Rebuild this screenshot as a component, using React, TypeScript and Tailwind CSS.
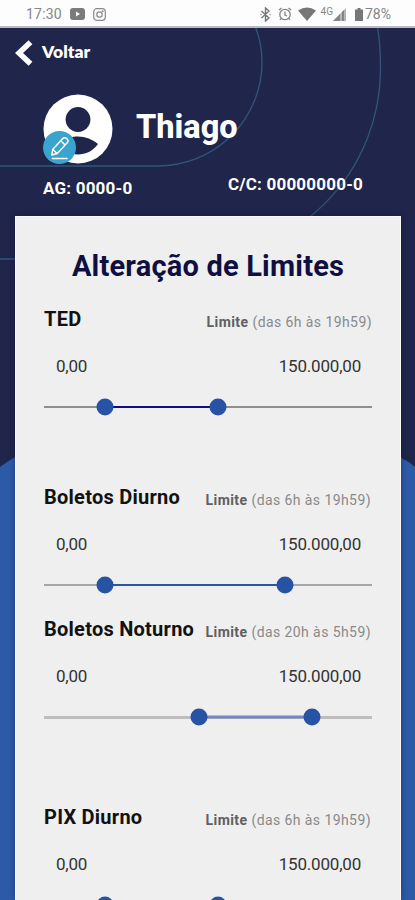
import React, { useState } from 'react';
import clsx from 'clsx';

interface LimitRow {
  id: string;
  name: string;
  hours: string;
  range: [number, number];
  gap: string;
  track: string;
  fill: string;
}

const LIMITS: LimitRow[] = [
  { id: 'ted', name: 'TED', hours: '(das 6h às 19h59)', range: [60.5, 173.5], gap: 'mt-[22px]', track: 'h-[1.5px] bg-[#8f8f8f]', fill: 'h-[2px] bg-[#0e0e85]' },
  { id: 'boletos-diurno', name: 'Boletos Diurno', hours: '(das 6h às 19h59)', range: [60.5, 241], gap: 'mt-[66px]', track: 'h-[2px] bg-[#a6a6a6]', fill: 'h-[2px] bg-[#2857a4]' },
  { id: 'boletos-noturno', name: 'Boletos Noturno', hours: '(das 20h às 5h59)', range: [155, 268], gap: 'mt-[20px]', track: 'h-[3px] bg-[#bdbdbd]', fill: 'h-[3px] bg-[#7488bd]' },
  { id: 'pix-diurno', name: 'PIX Diurno', hours: '(das 6h às 19h59)', range: [60.5, 173.5], gap: 'mt-[76px]', track: 'h-[2px] bg-[#a6a6a6]', fill: 'h-[2px] bg-[#2857a4]' },
];

export default function App() {
  return (
    <div className="relative flex h-[900px] w-[415px] flex-col overflow-hidden bg-[#20254b] font-['Roboto',sans-serif]">
      <Backdrop />
      <StatusBar />

      <header className="relative flex h-[188px] shrink-0 flex-col text-white">
        <button className="mt-[11px] ml-[15px] flex h-[27px] w-fit items-center gap-[9px]">
          <svg width="18" height="26" viewBox="0 0 18 26" fill="none" stroke="white" strokeWidth="5.5">
            <path d="M15.5 2.2 4 13 15.5 23.8" />
          </svg>
          <span className="mb-[2px] font-['Lato',sans-serif] text-[17.5px] leading-none font-extrabold">Voltar</span>
        </button>

        <div className="mt-[28px] ml-[43px] flex h-[70px] items-center gap-[23px]">
          <Avatar />
          <h1 className="mb-[3px] text-[32.5px] leading-none font-extrabold">Thiago</h1>
        </div>

        <div className="mt-[9px] flex justify-between pr-[52px] pl-[43px] text-[17px] leading-[20px] font-bold tracking-[0.2px]">
          <span className="mt-[5px]">AG: 0000-0</span>
          <span className="mt-px">C/C: 00000000-0</span>
        </div>
      </header>

      <main className="relative mx-[15px] w-[386px] flex-1 overflow-hidden border-x border-t border-[#fafafa] bg-[#efefef] shadow-[0_0_6px_rgba(10,10,70,0.4)]">
        <h2 className="mt-[32px] text-center text-[29px] leading-[34px] font-bold tracking-[0.2px] text-[#0f1040]">Alteração de Limites</h2>
        <div className="px-[28px]">
          {LIMITS.map((limit) => (
            <LimitSlider key={limit.id} limit={limit} />
          ))}
        </div>
      </main>
    </div>
  );
}

function LimitSlider({ limit }: { limit: LimitRow }) {
  const [[from, to]] = useState(limit.range);

  return (
    <section className={clsx('flex flex-col', limit.gap)}>
      <div className="flex h-[28px] items-center justify-between">
        <h3 className="text-[20px] leading-none font-bold tracking-[0.25px] text-[#121212]">{limit.name}</h3>
        <p className={clsx('mt-[6px] text-[14px] leading-none tracking-[0.42px] text-[#8a8a8a]', limit.id !== 'ted' && 'mr-px')}>
          <b className="font-bold text-[#606060]">Limite</b> {limit.hours}
        </p>
      </div>
      <div className="mt-[22px] flex h-[22px] items-center justify-between pr-[11px] pl-[12px] text-[17px] leading-none tracking-[-0.2px] text-[#333]">
        <span>0,00</span>
        <span>150.000,00</span>
      </div>
      <div className="relative mt-[20px] flex h-[20px] items-center">
        <div className={clsx('w-full', limit.track)} />
        <div
          className={clsx('absolute top-1/2 -translate-y-1/2', limit.fill)}
          style={{ left: from, width: to - from }}
        />
        {[from, to].map((x) => (
          <span
            key={x}
            className="absolute top-1/2 h-[17px] w-[17px] -translate-x-1/2 -translate-y-1/2 rounded-full bg-[#2653a3]"
            style={{ left: x }}
          />
        ))}
      </div>
    </section>
  );
}

function Avatar() {
  return (
    <div className="relative h-[70px] w-[70px]">
      <svg width="70" height="70" viewBox="0 0 70 70">
        <circle cx="35" cy="35" r="34.5" fill="white" />
        <circle cx="35" cy="25.500" r="12.400" fill="#20254b" />
        <path d="M15 50C20 45 28 42.500 35 42.500S50 45.500 55 50C50 57 42.500 60.500 35 60.500S20 57 15 50Z" fill="#20254b" />
      </svg>
      <div className="absolute bottom-0 left-0 flex h-[33px] w-[33px] items-center justify-center rounded-full bg-[#39a5cf]">
        <svg width="20" height="24" viewBox="0 0 20 24" fill="none" stroke="white" strokeWidth="1.500" strokeLinejoin="round" strokeLinecap="round">
          <path d="M1.800 19 2.700 13.500 12.500 2.700Q14.500 0.800 16.800 2.600T17.200 6.800L7.200 17.500ZM10.800 4.800l4.300 4.200M2.700 13.500l4.500 4" />
          <path d="M2.500 22.500h14.500" />
        </svg>
      </div>
    </div>
  );
}

function StatusBar() {
  return (
    <div className="relative flex h-[28px] shrink-0 items-center border-b-2 border-[#b9bac2] bg-[#fdfdfd] pt-[2px] pr-[24px] pl-[26px] text-[14px] leading-none text-[#858585]">
      <span className="w-[36px] tracking-[0.2px]">17:30</span>
      <svg className="ml-[8px]" width="15" height="12" viewBox="0 0 15 12">
        <rect width="15" height="12" rx="3" fill="#7b7b7b" />
        <path d="M6 3.500v5L10 6Z" fill="white" />
      </svg>
      <svg className="ml-[8px]" width="13" height="13" viewBox="0 0 13 13" fill="none" stroke="#8a8a8a" strokeWidth="1.200">
        <rect x="0.700" y="0.700" width="11.600" height="11.600" rx="3" />
        <circle cx="6.500" cy="6.500" r="2.700" />
        <circle cx="9.700" cy="3.300" r="0.400" />
      </svg>

      <svg className="ml-auto" width="11" height="15" viewBox="0 0 11 15" fill="none" stroke="#777" strokeWidth="1.400">
        <path d="M1.500 4 9 11 5.500 14V1L9 4 1.500 11M0.500 7.500h1M9.500 7.500h1" />
      </svg>
      <svg className="ml-[7px]" width="14" height="14" viewBox="0 0 14 14" fill="none" stroke="#858585" strokeWidth="1.300">
        <circle cx="7" cy="7.500" r="5.200" />
        <path d="M7 4.500V8l2 1M1 3l2.500-2M13 3l-2.500-2M3 11.500l-1 1.500M11 11.500l1 1.500" />
      </svg>
      <svg className="ml-[6px]" width="18" height="14" viewBox="0 0 18 14">
        <path d="M0 3.500Q9-2.500 18 3.500L9 14Z" fill="#777" />
      </svg>
      <span className="mb-[5px] ml-[5px] text-[10px]">4G</span>
      <svg width="13" height="13" viewBox="0 0 13 13">
        <path d="M13 0V13H0Z" fill="#b5b5b5" />
        <path d="M7 6V13H0ZM9 4v9h2V2Z" fill="#858585" />
      </svg>
      <svg className="ml-[9px]" width="8" height="13" viewBox="0 0 8 13">
        <path d="M2.500 0h3v1.500H8V13H0V1.500h2.500Z" fill="#777" />
      </svg>
      <span className="ml-[2px]">78%</span>
    </div>
  );
}

// Thin arcs behind the header and the blue ground behind the card
function Backdrop() {
  return (
    <svg className="absolute inset-0" width="415" height="900" viewBox="0 0 415 900" fill="none">
      <g stroke="#31557b" strokeWidth="1.300">
        <path d="M0 166H158A104 104 0 0 0 262 62Q262 44 255.500 27" />
        <path d="M0 259H190.500A190 190 0 0 0 380.500 69Q380.500 44 377.500 27" />
      </g>
      <path d="M0 467Q8 461 15 457H400Q408 461 415 467V900H0Z" fill="#2d5aa6" />
    </svg>
  );
}
